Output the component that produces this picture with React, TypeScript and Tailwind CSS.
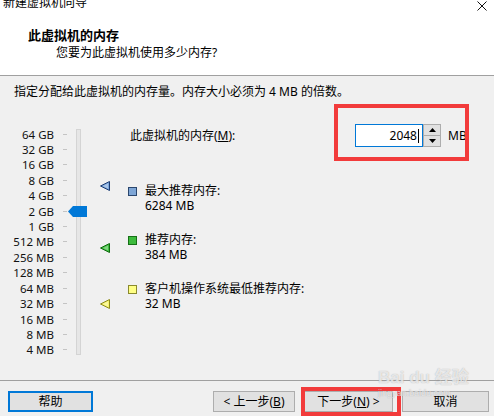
import React from "react";

const LABELS = [
  "64 GB", "32 GB", "16 GB", "8 GB", "4 GB", "2 GB", "1 GB",
  "512 MB", "256 MB", "128 MB", "64 MB", "32 MB", "16 MB", "8 MB", "4 MB",
];

const ROW = 15.43;
const TOP_PAD = 6.3;

// y of a memory value on the slider scale, relative to the slider block
function scaleY(mb: number) {
  const idx = Math.log2(65536 / mb);
  return TOP_PAD + ROW / 2 + idx * ROW;
}

const MARKERS = [
  { mb: 6284, fill: "#7ea8dc", edge: "#1d3c73" },
  { mb: 384, fill: "#3fbf3f", edge: "#0f6a0f" },
  { mb: 32, fill: "#f7f36a", edge: "#8d8a1e" },
];

function Marker({ fill, edge }: { fill: string; edge: string }) {
  return (
    <svg width="10" height="10" viewBox="0 0 10 10">
      <polygon points="0.5,5 9.5,0.5 9.5,9.5" fill={fill} stroke={edge} strokeWidth="1" />
      <polygon points="3,5 8,2.5 8,7.5" fill="#ffffff" opacity="0.35" />
    </svg>
  );
}

function Slider() {
  return (
    <div className="relative w-[128px] h-[260px] flex">
      <div className="flex flex-col pt-[6.3px]">
        {LABELS.map((l) => (
          <div key={l} className="flex items-center h-[15.43px]">
            <span className="w-[54px] text-right leading-[15px] text-[11.5px] text-[#111]">{l}</span>
            <span className="ml-[9px] w-[4px] h-px bg-[#c4c4c4]" />
          </div>
        ))}
      </div>
      <div className="ml-[9px] mt-[9px] w-[5px] h-[226px] bg-[#e6e6e6] border border-[#d4d4d4]" />
      <svg
        className="absolute left-[68px]"
        style={{ top: scaleY(2048) - 5.5 }}
        width="19"
        height="11"
        viewBox="0 0 19 11"
      >
        <polygon points="0,5.5 5,0 19,0 19,11 5,11" fill="#0078d7" />
      </svg>
      {MARKERS.map((m) => (
        <div key={m.mb} className="absolute left-[100px]" style={{ top: scaleY(m.mb) - 5 }}>
          <Marker fill={m.fill} edge={m.edge} />
        </div>
      ))}
    </div>
  );
}

function LegendItem({ box, title, value }: { box: string; title: string; value: string }) {
  return (
    <div className="flex">
      <span className={`mt-[4px] w-[9px] h-[9px] border ${box}`} />
      <div className="ml-[8px] flex flex-col leading-[15px]">
        <span>{title}</span>
        <span>{value}</span>
      </div>
    </div>
  );
}

function Btn({ w, children, focus }: { w: string; children: React.ReactNode; focus?: boolean }) {
  return (
    <div
      className={`${w} h-[21px] flex items-center justify-center bg-[#e1e1e1] text-[12px] ${
        focus ? "border-2 border-[#0078d7]" : "border border-[#adadad]"
      }`}
    >
      {children}
    </div>
  );
}

export default function App() {
  return (
    <div className="relative w-[494px] h-[416px] overflow-hidden bg-[#f0f0f0] text-[12px] text-black font-['Noto_Sans','Noto_Sans_CJK_SC',sans-serif]">
      <div className="h-[76px] bg-white border-b border-[#a0a0a0] flex flex-col">
        <div className="h-[12px] flex items-start justify-between">
          <span className="ml-[3px] -mt-[5px] leading-[16px]">新建虚拟机向导</span>
          <svg className="mr-[7px] mt-[1px]" width="10" height="10" viewBox="0 0 10 10">
            <path d="M0.5 0.5 L9.5 9.5 M9.5 0.5 L0.5 9.5" stroke="#111" strokeWidth="1" />
          </svg>
        </div>
        <div className="ml-[28px] mt-[14.5px] leading-[16px] text-[13px] font-bold">此虚拟机的内存</div>
        <div className="ml-[56px] mt-[2.5px] leading-[16px]">您要为此虚拟机使用多少内存?</div>
      </div>

      <div className="h-[305px] border-b border-[#a0a0a0] flex flex-col">
        <div className="ml-[14px] mt-[8px] leading-[16px]">指定分配给此虚拟机的内存量。内存大小必须为 4 MB 的倍数。</div>
        <div className="mt-[20px] flex">
          <Slider />
          <div className="flex flex-col">
            <div className="mt-[4px] flex items-center h-[23px]">
              <span className="ml-[2px] w-[225px]">
                此虚拟机的内存(<span className="underline">M</span>):
              </span>
              <div className="w-[68px] h-[23px] bg-white border border-[#0078d7] flex items-center justify-end pr-[3px]">
                <span className="leading-[15px]">2048</span>
                <span className="ml-[1px] w-px h-[14px] bg-black" />
              </div>
              <div className="flex flex-col w-[18px] h-[23px] border border-[#adadad] bg-[#e1e1e1]">
                <div className="flex-1 flex items-center justify-center border-b border-[#adadad]">
                  <svg width="7" height="4" viewBox="0 0 7 4"><polygon points="0,4 3.5,0 7,4" fill="#000" /></svg>
                </div>
                <div className="flex-1 flex items-center justify-center">
                  <svg width="7" height="4" viewBox="0 0 7 4"><polygon points="0,0 3.5,4 7,0" fill="#000" /></svg>
                </div>
              </div>
              <span className="ml-[7px]">MB</span>
            </div>
            <div className="mt-[35.5px] flex flex-col gap-[19px]">
              <LegendItem box="bg-[#7ea6d6] border-[#2a466d]" title="最大推荐内存:" value="6284 MB" />
              <LegendItem box="bg-[#3dbb3d] border-[#167016]" title="推荐内存:" value="384 MB" />
              <LegendItem box="bg-[#ffff84] border-[#8a8a2e]" title="客户机操作系统最低推荐内存:" value="32 MB" />
            </div>
          </div>
        </div>
      </div>

      <div className="flex px-[8px] pt-[10px]">
        <Btn w="w-[85px]" focus>帮助</Btn>
        <div className="ml-auto mr-[-3px] flex gap-[9px]">
          <Btn w="w-[82px]">&lt; 上一步(<span className="underline">B</span>)</Btn>
          <Btn w="w-[89px]">下一步(<span className="underline">N</span>) &gt;</Btn>
          <Btn w="w-[87px]">取消</Btn>
        </div>
      </div>

      <div className="absolute left-[334px] top-[104px] w-[135px] h-[57px] border-4 border-[#f23b3b]" />
      <div className="absolute left-[301px] top-[387px] w-[100px] h-[29px] border-4 border-[#f23b3b]" />

      <div className="absolute left-[378px] top-[368px] flex flex-col items-start pointer-events-none text-white/70 [text-shadow:0_0_1px_rgba(120,120,120,0.6)]">
        <span className="text-[17px] font-bold leading-[20px] font-['Liberation_Sans','Noto_Sans_CJK_SC',sans-serif]">Bai du 经验</span>
        <span className="text-[9px] leading-[11px] font-['Liberation_Sans',sans-serif]">jingyan.baidu.com</span>
      </div>
    </div>
  );
}
